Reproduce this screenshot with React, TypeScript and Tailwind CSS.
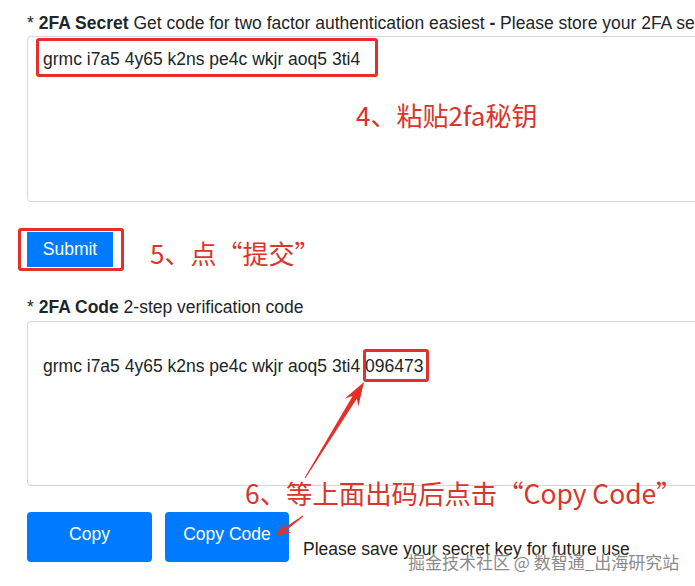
export default function App() {
  const red = "#e3302a";

  return (
    <div className="relative h-[586px] w-[695px] overflow-hidden bg-white text-[#212529] [font-family:'Liberation_Sans',Arial,sans-serif]">
      {/* Form */}
      <div className="flex w-[780px] flex-col pl-[27px] pt-[11px]">
        <div className="whitespace-nowrap text-[17.5px] leading-[24px]">
          * <b>2FA Secret</b> Get code for two factor authentication easiest <b>-</b> Please store your 2FA secret key
        </div>
        <div className="mt-[1px] h-[166px] rounded-[4px] border border-[#d6d6d6] pl-[15px] pt-[10px] text-[17.5px] leading-[24px]">
          grmc i7a5 4y65 k2ns pe4c wkjr aoq5 3ti4
        </div>

        <div className="mt-[30px]">
          <button className="h-[35px] w-[86px] bg-[#007bff] text-[17.5px] text-white">Submit</button>
        </div>

        <div className="mt-[28px] whitespace-nowrap text-[17.5px] leading-[24px]">
          * <b>2FA Code</b> 2-step verification code
        </div>
        <div className="mt-[2px] h-[165px] rounded-[4px] border border-[#d6d6d6] pl-[15px] pt-[32px] text-[17.5px] leading-[24px]">
          grmc i7a5 4y65 k2ns pe4c wkjr aoq5 3ti4 096473
        </div>

        <div className="mt-[26px] flex items-end">
          <button className="h-[50px] w-[125px] rounded-[4px] bg-[#007bff] pb-[6px] text-[17.5px] text-white">Copy</button>
          <button className="ml-[13px] h-[50px] w-[124px] rounded-[4px] bg-[#007bff] pb-[6px] text-[17.5px] text-white">Copy Code</button>
          <span className="mb-[1px] ml-[14px] whitespace-nowrap text-[17.5px] leading-[24px] text-[#222]">Please save your secret key for future use</span>
        </div>
      </div>

      {/* Annotations */}
      <div className="pointer-events-none absolute left-[36px] top-[38px] h-[39px] w-[342px] rounded-[3px] border-[3px]" style={{ borderColor: red }} />
      <div className="pointer-events-none absolute left-[18px] top-[228px] h-[43px] w-[106px] rounded-[3px] border-[3px]" style={{ borderColor: red }} />
      <div className="pointer-events-none absolute left-[363px] top-[349px] h-[33px] w-[66px] rounded-[3px] border-[3px]" style={{ borderColor: red }} />

      <div className="absolute left-[356px] top-[98px] whitespace-nowrap text-[26px] leading-[34px] text-[#d8352c] [font-family:'Noto_Sans_CJK_SC',sans-serif]">
        4、粘贴2fa秘钥
      </div>
      <div className="absolute left-[150px] top-[236px] whitespace-nowrap text-[26px] leading-[34px] text-[#d8352c] [font-family:'Noto_Sans_CJK_SC',sans-serif]">
        5、点“提交”
      </div>
      <div className="absolute left-[245px] top-[476px] whitespace-nowrap text-[26.4px] leading-[34px] text-[#d8352c] [font-family:'Noto_Sans_CJK_SC',sans-serif]">
        6、等上面出码后点击“Copy Code”
      </div>

      <svg className="pointer-events-none absolute left-0 top-0" width="695" height="586">
        <polygon
          fill={red}
          points="364,382 358.4,406.6 356.8,398.7 305.4,478.3 304.6,477.7 352.6,396.1 344.8,398.4"
        />
        <polygon
          fill={red}
          points="276,536 290.9,532.5 285.7,530.7 303.3,516.4 302.7,515.6 283.9,528.3 283.7,522.9"
        />
      </svg>

      {/* Watermark */}
      <div className="absolute left-[408px] top-[551px] whitespace-nowrap text-[17px] leading-[22px] text-[#8a8a8a] [font-family:'Noto_Sans_CJK_SC',sans-serif] [text-shadow:0_0_2px_#fff,0_0_2px_#fff]">
        掘金技术社区 @ 数智通_出海研究站
      </div>
    </div>
  );
}
